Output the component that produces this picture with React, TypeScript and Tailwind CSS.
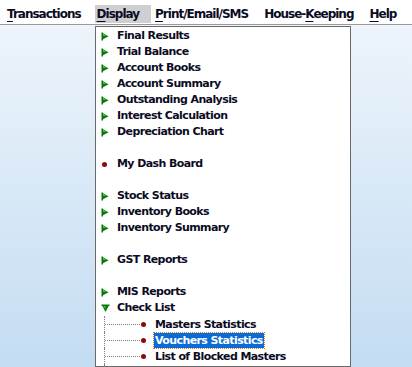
import React from "react";

type Item =
  | { kind: "arrow"; label: string }
  | { kind: "dot"; label: string }
  | { kind: "open"; label: string }
  | { kind: "child"; label: string; selected?: boolean; last?: boolean }
  | { kind: "gap" };

const items: Item[] = [
  { kind: "arrow", label: "Final Results" },
  { kind: "arrow", label: "Trial Balance" },
  { kind: "arrow", label: "Account Books" },
  { kind: "arrow", label: "Account Summary" },
  { kind: "arrow", label: "Outstanding Analysis" },
  { kind: "arrow", label: "Interest Calculation" },
  { kind: "arrow", label: "Depreciation Chart" },
  { kind: "gap" },
  { kind: "dot", label: "My Dash Board" },
  { kind: "gap" },
  { kind: "arrow", label: "Stock Status" },
  { kind: "arrow", label: "Inventory Books" },
  { kind: "arrow", label: "Inventory Summary" },
  { kind: "gap" },
  { kind: "arrow", label: "GST Reports" },
  { kind: "gap" },
  { kind: "arrow", label: "MIS Reports" },
  { kind: "open", label: "Check List" },
  { kind: "child", label: "Masters Statistics" },
  { kind: "child", label: "Vouchers Statistics", selected: true },
  { kind: "child", label: "List of Blocked Masters" },
  { kind: "child", label: "Summary of Voucher Types", last: true },
];

function RightArrow() {
  return (
    <svg width="8" height="9" viewBox="0 0 8 9" className="shrink-0">
      <path d="M0.5 0.5 L2 0.5 L2 1.2 L7.5 4.2 L2 7.2 L2 8.5 L0.5 8.5 Z" fill="#0a770a" />
      <path d="M2 1.8 L2 4 L5.8 4 Z" fill="#3fbf3f" />
    </svg>
  );
}

function DownArrow() {
  return (
    <svg width="9" height="9" viewBox="0 0 9 9" className="shrink-0">
      <path d="M0.5 0.5 L8.5 0.5 L8.5 2 L7.6 2 L4.5 8 L1.4 2 L0.5 2 Z" fill="#0a770a" />
      <path d="M2.4 2 L4.5 2 L4.5 5.6 Z" fill="#3fbf3f" />
    </svg>
  );
}

function Dot() {
  return <span className="block h-[5px] w-[5px] shrink-0 rounded-full bg-[#8a0b0b]" />;
}

const menus = [
  { label: "Transactions", key: "T", rest: "ransactions" },
  { label: "Display", key: "D", rest: "isplay", active: true },
  { label: "Print/Email/SMS", key: "P", rest: "rint/Email/SMS" },
  { label: "House-Keeping", pre: "House-", key: "K", rest: "eeping" },
  { label: "Help", key: "H", rest: "elp" },
  { label: "F", key: "F", rest: "" },
];

export default function App() {
  return (
    <div
      className="flex h-[367px] w-[412px] flex-col overflow-hidden bg-white text-[#0b0b24]"
      style={{ fontFamily: '"DejaVu Sans", Verdana, sans-serif' }}
    >
      <div className="flex h-[25px] shrink-0 items-start gap-[2px] overflow-hidden border-b border-[#9a9a9a] bg-white pl-[5px] pt-[5px] text-[12px] font-bold leading-[18px] tracking-[-1px] whitespace-nowrap">
        {menus.map((m) => (
          <div key={m.label} className={"h-[18px] pl-[2px] pr-[12px] " + (m.active ? "bg-[#cfcfcf]" : "")}>
            {m.pre}
            <span className="underline underline-offset-[3px]">{m.key}</span>
            {m.rest}
          </div>
        ))}
      </div>
      <div className="flex min-h-0 flex-1 bg-gradient-to-b from-[#edf4fb] to-[#c3dcf2] pl-[95px] pt-px">
        <div className="w-[256px] border border-[#6a6a6a] bg-white pt-px text-[11px] font-bold tracking-[-0.6px] whitespace-nowrap">
          {items.map((it, i) => {
            if (it.kind === "gap") return <div key={i} className="h-[16px]" />;
            if (it.kind === "child") {
              return (
                <div key={i} className="relative flex h-[16px] items-center pl-[45px]">
                  <span className={"absolute left-[8px] top-0 w-0 border-l border-dotted border-[#808080] " + (it.last ? "h-[8px]" : "h-[16px]")} />
                  <span className="absolute left-[9px] top-[8px] w-[35px] border-t border-dotted border-[#808080]" />
                  <Dot />
                  <span
                    className={
                      "ml-[8px] px-[1px] leading-[15px] " +
                      (it.selected ? "bg-[#0a6ad6] text-white outline outline-1 outline-dotted outline-[#c27a1a]" : "")
                    }
                  >
                    {it.label}
                  </span>
                </div>
              );
            }
            return (
              <div key={i} className="flex h-[16px] items-center pl-[5px]">
                <span className="flex w-[16px] items-center">
                  {it.kind === "arrow" ? <RightArrow /> : it.kind === "open" ? <DownArrow /> : <span className="pl-px"><Dot /></span>}
                </span>
                <span>{it.label}</span>
              </div>
            );
          })}
        </div>
      </div>
    </div>
  );
}
